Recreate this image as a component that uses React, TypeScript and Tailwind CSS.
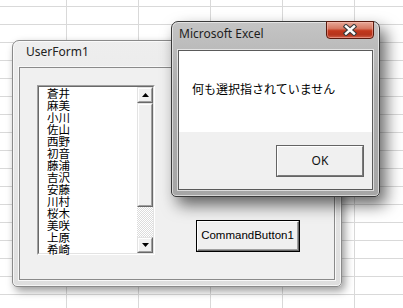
const NAMES = [
  "蒼井",
  "麻美",
  "小川",
  "佐山",
  "西野",
  "初音",
  "藤浦",
  "吉沢",
  "安藤",
  "川村",
  "桜木",
  "美咲",
  "上原",
  "希崎",
];

function Arrow({ down }: { down?: boolean }) {
  return (
    <svg width="7" height="4" viewBox="0 0 7 4">
      <polygon points={down ? "0,0 7,0 3.5,4" : "3.5,0 7,4 0,4"} fill="#000" />
    </svg>
  );
}

// classic raised 3D box used by scroll buttons and the thumb
function Raised({ className, children }: { className?: string; children?: React.ReactNode }) {
  return (
    <div
      className={`flex border border-t-[#e3e3e3] border-l-[#e3e3e3] border-r-[#696969] border-b-[#696969] ${className ?? ""}`}
    >
      <div className="flex flex-1 items-center justify-center border border-t-white border-l-white border-r-[#a0a0a0] border-b-[#a0a0a0] bg-[#f0f0f0]">
        {children}
      </div>
    </div>
  );
}

function ListBox() {
  return (
    <div className="ml-[17px] mt-[17px] flex h-[170px] w-[118px] border border-t-[#a0a0a0] border-l-[#a0a0a0] border-r-white border-b-white">
      <div className="flex flex-1 border border-t-[#696969] border-l-[#696969] border-r-[#e3e3e3] border-b-[#e3e3e3] bg-white">
        <ul className="flex-1 pl-[8px] font-['Noto_Sans_CJK_JP',sans-serif] text-[11.5px] leading-[12px] text-black">
          {NAMES.map((n) => (
            <li key={n} className="h-[12px]">
              {n}
            </li>
          ))}
        </ul>
        <div className="flex w-[16px] flex-col">
          <Raised className="h-[16px]">
            <Arrow />
          </Raised>
          <Raised className="h-[104px]" />
          <div className="flex-1 bg-[image:repeating-conic-gradient(#dcdcdc_0_25%,#ffffff_0_50%)] bg-size-[2px_2px]" />
          <Raised className="h-[16px]">
            <Arrow down />
          </Raised>
        </div>
      </div>
    </div>
  );
}

function UserForm() {
  return (
    <div className="absolute left-[12px] top-[40px] flex h-[247px] w-[330px] flex-col rounded-t-[7px] rounded-b-[5px] border border-[#8a8a8a] bg-[linear-gradient(#eeeeee,#dedede)] px-[6px] pb-[6px] shadow-[3px_4px_9px_rgba(0,0,0,0.4),inset_0_0_0_1px_rgba(255,255,255,0.7)]">
      <div className="h-[26px] pl-[7px] pt-[3px] font-['Noto_Sans',sans-serif] text-[12px] leading-[16px] text-[#222]">
        UserForm1
      </div>
      <div className="flex flex-1 items-start border border-[#8a8a8a] bg-[#f0f0f0] shadow-[0_0_0_1px_#f8f8f8]">
        <ListBox />
        <div className="ml-[41px] mt-[152px] flex h-[32px] w-[104px] border border-black">
          <div className="flex flex-1 border border-t-white border-l-white border-r-[#696969] border-b-[#696969]">
            <div className="flex flex-1 items-center justify-center border-r border-b border-[#a0a0a0] bg-[#f0f0f0] pt-[1px] font-['Liberation_Sans',sans-serif] text-[11.5px] text-black">
              CommandButton1
            </div>
          </div>
        </div>
      </div>
    </div>
  );
}

function CloseButton() {
  return (
    <div className="-mr-[1px] -mt-[1px] flex h-[18px] w-[48px] items-center justify-center rounded-b-[4px] border border-[#5a1a0e] bg-[linear-gradient(#e6a897_0%,#d77a64_40%,#c2371c_55%,#b5341c_80%,#d0604a_100%)] shadow-[inset_0_0_0_1px_rgba(255,200,190,0.45)]">
      <svg width="14" height="12" viewBox="0 0 14 12">
        <path d="M3 2.5 L11 9.5 M11 2.5 L3 9.5" stroke="#3b3b3b" strokeWidth="4.6" strokeLinecap="square" />
        <path d="M3 2.5 L11 9.5 M11 2.5 L3 9.5" stroke="#ffffff" strokeWidth="2.4" strokeLinecap="square" />
      </svg>
    </div>
  );
}

function MsgBox() {
  return (
    <div className="absolute left-[171px] top-[21px] flex h-[176px] w-[209px] flex-col rounded-t-[7px] rounded-b-[5px] border border-[#3a3a3a] bg-[linear-gradient(#c4c4c4,#adadad_40%,#a6a6a6)] px-[6px] pb-[6px] shadow-[6px_8px_16px_rgba(0,0,0,0.6),inset_0_0_0_1px_rgba(255,255,255,0.55)]">
      <div className="flex h-[28px] items-start justify-between">
        <div className="pl-[1px] pt-[4px] font-['Noto_Sans',sans-serif] text-[12px] leading-[16px] text-[#1e1e1e]">
          Microsoft Excel
        </div>
        <CloseButton />
      </div>
      <div className="flex flex-1 flex-col border border-[#5a5a5a] shadow-[0_0_0_1px_rgba(255,255,255,0.6)]">
        <div className="flex-1 bg-white pl-[13px] pt-[30px] font-['Noto_Sans_CJK_JP',sans-serif] text-[12px] leading-[16px] text-black">
          何も選択指されていません
        </div>
        <div className="flex h-[57px] justify-end bg-[#f0f0f0] pr-[8px] pt-[13px]">
          <div className="flex h-[32px] w-[88px] border border-[#646464]">
            <div className="flex flex-1 items-center justify-center border border-t-white border-l-white border-r-[#7a7a7a] border-b-[#7a7a7a] bg-[#f0f0f0] font-['Noto_Sans',sans-serif] text-[12px] text-[#111]">
              OK
            </div>
          </div>
        </div>
      </div>
    </div>
  );
}

export default function App() {
  return (
    <div className="relative h-[308px] w-[403px] overflow-hidden bg-white bg-[image:linear-gradient(to_right,#d9d9d9_1px,transparent_1px),linear-gradient(to_bottom,#d9d9d9_1px,transparent_1px)] bg-size-[72px_18px] bg-position-[66px_6px]">
      <UserForm />
      <MsgBox />
    </div>
  );
}
